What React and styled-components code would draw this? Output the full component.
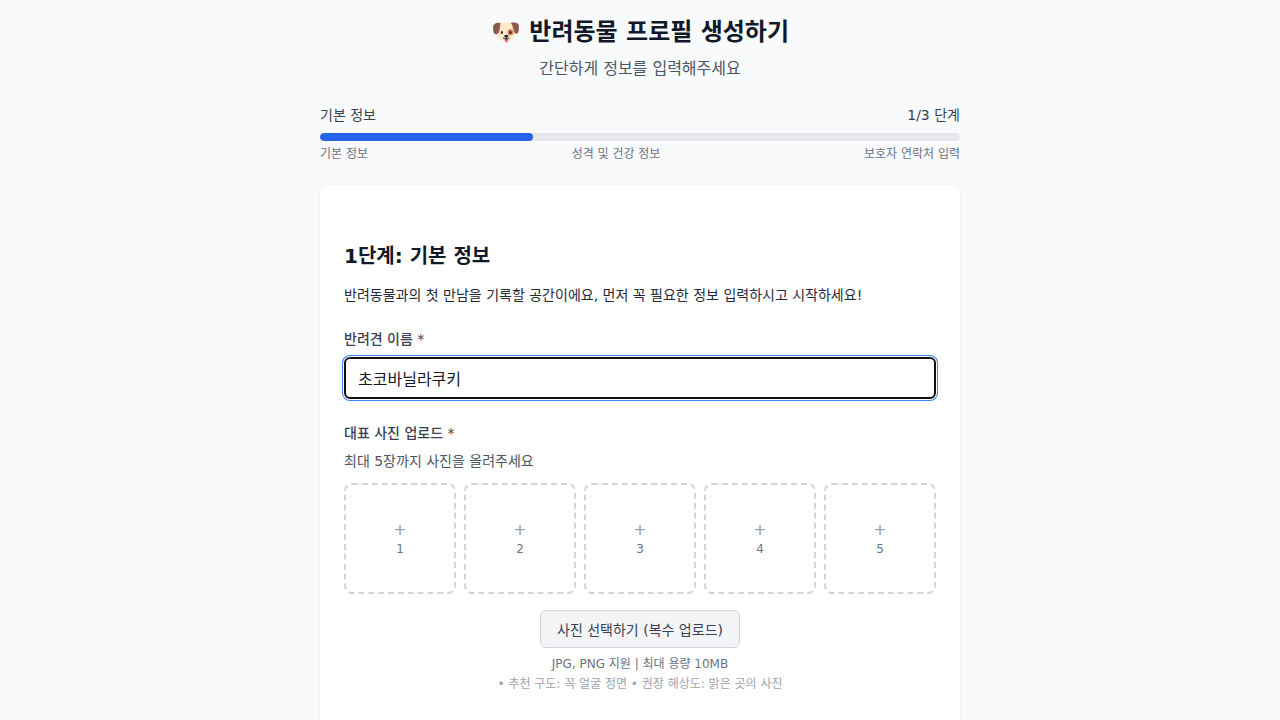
import React, { useState } from 'react'
import styled, { createGlobalStyle } from 'styled-components'

const GlobalStyle = createGlobalStyle`
  * { box-sizing: border-box; }
  body {
    margin: 0;
    background: #f9fafb;
    font-family: "DejaVu Sans", "Noto Sans CJK KR", sans-serif;
    color: #1f2937;
  }
`

const Page = styled.div`
  width: 640px;
  margin: 0 auto;
  padding-top: 16px;
`

const Header = styled.header`
  text-align: center;
  margin-bottom: 26px;
`

const Title = styled.h1`
  margin: 0;
  font-size: 24px;
  line-height: 32px;
  font-weight: 700;
  color: #111827;
`

const Subtitle = styled.p`
  margin: 11px 0 0;
  font-size: 16px;
  line-height: 20px;
  color: #4b5563;
`

const ProgressTop = styled.div`
  display: flex;
  justify-content: space-between;
  font-size: 14px;
  line-height: 20px;
  color: #374151;
`

const Track = styled.div`
  margin-top: 8px;
  height: 8px;
  border-radius: 4px;
  background: #e5e7eb;
  overflow: hidden;
`

const Fill = styled.div`
  height: 100%;
  border-radius: 4px;
  background: #2563eb;
`

const StepLabels = styled.div`
  display: flex;
  justify-content: space-between;
  margin-top: 5px;
  font-size: 12px;
  line-height: 16px;
  color: #6b7280;
`

const Card = styled.section`
  margin-top: 23px;
  background: #fff;
  border-radius: 8px;
  box-shadow: 0 1px 3px rgba(0, 0, 0, 0.08);
  padding: 57px 24px 40px;
`

const StepTitle = styled.h2`
  margin: 0;
  font-size: 20px;
  line-height: 28px;
  font-weight: 700;
  color: #111827;
`

const Intro = styled.p`
  margin: 15px 0 0;
  font-size: 14px;
  line-height: 20px;
  color: #1f2937;
`

const Field = styled.div`
  margin-top: ${({ gap }) => gap}px;
`

const Label = styled.label`
  display: block;
  font-size: 14px;
  line-height: 20px;
  font-weight: 500;
  color: #374151;
`

const Input = styled.input`
  display: block;
  width: 100%;
  height: 42px;
  margin-top: 8px;
  padding: 0 12px;
  font-family: inherit;
  font-size: 16px;
  color: #111827;
  border: 2px solid #111;
  border-radius: 6px;
  box-shadow: 0 0 0 1px #fff, 0 0 0 2px #3b82f6;
  outline: none;
  background: #fff;
`

const Help = styled.p`
  margin: 8px 0 0;
  font-size: 14px;
  line-height: 20px;
  color: #4b5563;
`

const Slots = styled.div`
  display: grid;
  grid-template-columns: repeat(5, 1fr);
  gap: 8px;
  margin-top: 12px;
`

const Slot = styled.div`
  height: 111px;
  border: 2px dashed #d1d5db;
  border-radius: 8px;
  display: flex;
  flex-direction: column;
  align-items: center;
  justify-content: center;
  color: #6b7280;
`

const Plus = styled.span`
  font-size: 16px;
  line-height: 18px;
  color: #9ca3af;
`

const SlotNum = styled.span`
  font-size: 12px;
  line-height: 16px;
  margin-top: 2px;
`

const UploadArea = styled.div`
  display: flex;
  flex-direction: column;
  align-items: center;
  margin-top: 16px;
`

const UploadButton = styled.button`
  height: 38px;
  padding: 0 16px;
  font-family: inherit;
  font-size: 14px;
  color: #374151;
  background: #f3f4f6;
  border: 1px solid #d1d5db;
  border-radius: 6px;
  cursor: pointer;
`

const Note = styled.p`
  margin: ${({ first }) => (first ? '8px' : '4px')} 0 0;
  font-size: 12px;
  line-height: 16px;
  color: ${({ muted }) => (muted ? '#9ca3af' : '#6b7280')};
`

export default function App() {
  const [name, setName] = useState('초코바닐라쿠키')
  const step = 1
  const total = 3

  return (
    <>
      <GlobalStyle />
      <Page>
        <Header>
          <Title>🐶 반려동물 프로필 생성하기</Title>
          <Subtitle>간단하게 정보를 입력해주세요</Subtitle>
        </Header>

        <ProgressTop>
          <span>기본 정보</span>
          <span>{step}/{total} 단계</span>
        </ProgressTop>
        <Track>
          <Fill style={{ width: `${(step / total) * 100}%` }} />
        </Track>
        <StepLabels>
          <span>기본 정보</span>
          <span>성격 및 건강 정보</span>
          <span>보호자 연락처 입력</span>
        </StepLabels>

        <Card>
          <StepTitle>1단계: 기본 정보</StepTitle>
          <Intro>반려동물과의 첫 만남을 기록할 공간이에요, 먼저 꼭 필요한 정보 입력하시고 시작하세요!</Intro>

          <Field gap={24}>
            <Label htmlFor="pet-name">반려견 이름 *</Label>
            <Input id="pet-name" value={name} onChange={e => setName(e.target.value)} />
          </Field>

          <Field gap={24}>
            <Label>대표 사진 업로드 *</Label>
            <Help>최대 5장까지 사진을 올려주세요</Help>
            <Slots>
              {[1, 2, 3, 4, 5].map(n => (
                <Slot key={n}>
                  <Plus>+</Plus>
                  <SlotNum>{n}</SlotNum>
                </Slot>
              ))}
            </Slots>
            <UploadArea>
              <UploadButton>사진 선택하기 (복수 업로드)</UploadButton>
              <Note first>JPG, PNG 지원 | 최대 용량 10MB</Note>
              <Note muted>• 추천 구도: 꼭 얼굴 정면 • 권장 해상도: 밝은 곳의 사진</Note>
            </UploadArea>
          </Field>
        </Card>
      </Page>
    </>
  )
}
